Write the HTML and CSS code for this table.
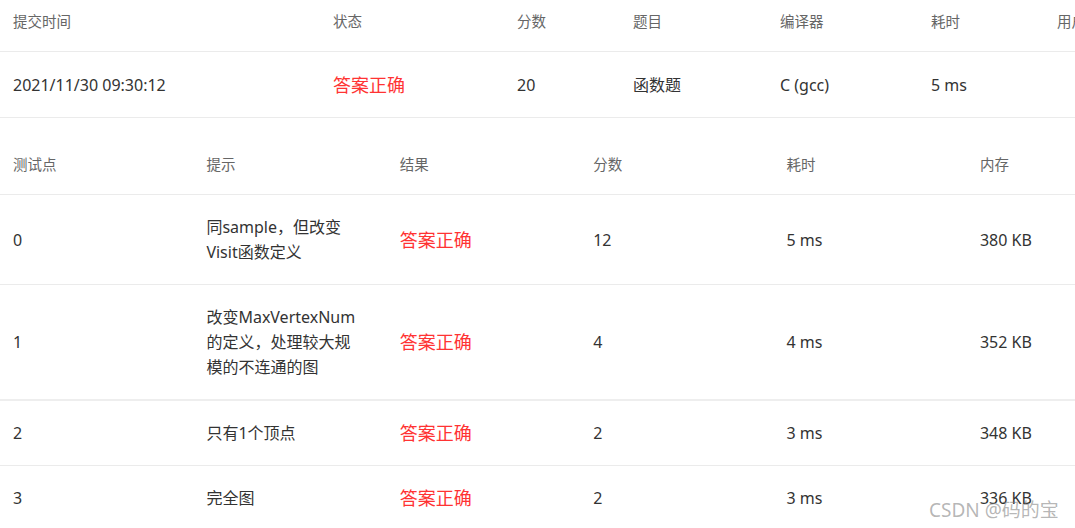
FILE: index.html
```html
<!DOCTYPE html>
<html lang="zh-CN">
<head>
<meta charset="utf-8">
<title>提交详情</title>
<link rel="stylesheet" href="styles.css">
</head>
<body>
<div class="page">
  <div class="table summary">
    <div class="row head">
      <div class="cell">提交时间</div>
      <div class="cell">状态</div>
      <div class="cell">分数</div>
      <div class="cell">题目</div>
      <div class="cell">编译器</div>
      <div class="cell">耗时</div>
      <div class="cell">用户</div>
    </div>
    <div class="row body">
      <div class="cell">2021/11/30 09:30:12</div>
      <div class="cell ok">答案正确</div>
      <div class="cell">20</div>
      <div class="cell">函数题</div>
      <div class="cell">C (gcc)</div>
      <div class="cell">5 ms</div>
      <div class="cell"></div>
    </div>
  </div>

  <div class="table cases">
    <div class="row head">
      <div class="cell">测试点</div>
      <div class="cell">提示</div>
      <div class="cell">结果</div>
      <div class="cell">分数</div>
      <div class="cell">耗时</div>
      <div class="cell">内存</div>
    </div>
    <div class="row body">
      <div class="cell">0</div>
      <div class="cell hint">同sample，但改变Visit函数定义</div>
      <div class="cell ok">答案正确</div>
      <div class="cell">12</div>
      <div class="cell">5 ms</div>
      <div class="cell">380 KB</div>
    </div>
    <div class="row body thick">
      <div class="cell">1</div>
      <div class="cell hint">改变MaxVertexNum的定义，处理较大规模的不连通的图</div>
      <div class="cell ok">答案正确</div>
      <div class="cell">4</div>
      <div class="cell">4 ms</div>
      <div class="cell">352 KB</div>
    </div>
    <div class="row body">
      <div class="cell">2</div>
      <div class="cell hint">只有1个顶点</div>
      <div class="cell ok">答案正确</div>
      <div class="cell">2</div>
      <div class="cell">3 ms</div>
      <div class="cell">348 KB</div>
    </div>
    <div class="row body">
      <div class="cell">3</div>
      <div class="cell hint">完全图</div>
      <div class="cell ok">答案正确</div>
      <div class="cell">2</div>
      <div class="cell">3 ms</div>
      <div class="cell">336 KB</div>
    </div>
  </div>

  <div class="watermark">CSDN @码的宝</div>
</div>
</body>
</html>
```

FILE: styles.css
```css
html, body {
  margin: 0;
  padding: 0;
  background: #fff;
}

body {
  font-family: "Noto Sans", "Noto Sans CJK SC", sans-serif;
  color: #333;
  overflow: hidden;
}

.page {
  position: relative;
  width: 1075px;
  height: 528px;
  overflow: hidden;
}

.table {
  width: 1200px;
}

.row {
  display: grid;
  align-items: center;
  border-bottom: 1px solid #ebebeb;
}

.summary .row {
  grid-template-columns: 320px 184px 116px 147px 151px 126px 156px;
}

.cases {
  margin-top: 25px;
}

.cases .row {
  grid-template-columns: repeat(6, 193.4px);
}

.cell {
  padding: 0 13px;
}

.head {
  padding: 11px 0 20px;
  font-size: 14.5px;
  line-height: 20px;
  color: #666;
}

.body {
  padding: 20px 0 19px;
  font-size: 16px;
  line-height: 25px;
  color: #333;
}

.summary .body {
  padding: 21px 0 19px;
}

.thick {
  border-bottom-width: 2px;
  border-bottom-color: #eeeeee;
}

.hint {
  padding-right: 28px;
}

.ok {
  color: #ff3333;
  font-size: 18px;
}

.watermark {
  position: absolute;
  left: 929px;
  top: 497px;
  font-size: 19px;
  line-height: 26px;
  color: rgba(120, 120, 120, 0.55);
  white-space: nowrap;
}
```
